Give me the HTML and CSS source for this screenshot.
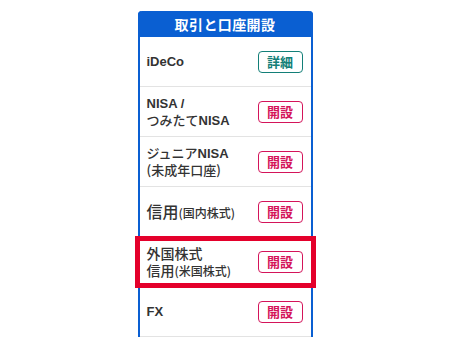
FILE: index.html
```html
<!DOCTYPE html>
<html lang="ja">
<head>
<meta charset="utf-8">
<link rel="stylesheet" href="styles.css">
</head>
<body>
<div class="card">
  <div class="card-head">取引と口座開設</div>
  <div class="row">
    <div class="label latin">iDeCo</div>
    <span class="btn btn-detail">詳細</span>
  </div>
  <div class="row">
    <div class="label"><span class="latin">NISA /</span><br>つみたて<span class="latin">NISA</span></div>
    <span class="btn">開設</span>
  </div>
  <div class="row">
    <div class="label">ジュニア<span class="latin">NISA</span><br><span class="sub">(未成年口座)</span></div>
    <span class="btn">開設</span>
  </div>
  <div class="row">
    <div class="label"><span class="big">信用</span><span class="small">(国内株式)</span></div>
    <span class="btn">開設</span>
  </div>
  <div class="row row-hl">
    <div class="label label-lg">外国株式<br>信用<span class="small">(米国株式)</span></div>
    <span class="btn">開設</span>
  </div>
  <div class="row">
    <div class="label latin">FX</div>
    <span class="btn">開設</span>
  </div>
</div>
</body>
</html>
```
FILE: styles.css
```css
html, body {
  margin: 0;
  padding: 0;
  background: #fff;
}
body {
  font-family: "Noto Sans CJK JP", "Noto Sans", sans-serif;
  color: #333;
}
.card {
  width: 171px;
  margin: 11px auto 0;
  border: 2px solid #0a5fd2;
  border-top: 0;
  border-bottom: 0;
  border-radius: 4px 4px 0 0;
}
.card-head {
  height: 26px;
  margin: 0 -2px;
  background: #0a5fd2;
  border-radius: 4px 4px 0 0;
  color: #fff;
  font-size: 14px;
  font-weight: 700;
  line-height: 26px;
  text-align: center;
  letter-spacing: 0.4px;
}
.row {
  height: 49px;
  border-bottom: 1px solid #e3e3e3;
  display: flex;
  align-items: center;
  justify-content: space-between;
  padding: 0 8px 0 7px;
  position: relative;
}
.label {
  font-size: 13px;
  line-height: 16px;
  font-weight: 500;
  color: #333;
}
.label-lg {
  font-size: 14px;
  line-height: 17px;
}
.latin {
  font-family: "Liberation Sans", "Noto Sans", sans-serif;
  font-weight: 700;
  font-size: 13px;
}
.sub {
  font-size: 13px;
}
.big {
  font-size: 16px;
}
.small {
  font-size: 12px;
}
.btn {
  width: 43px;
  height: 20px;
  border: 1px solid #d4145a;
  border-radius: 4px;
  color: #d4145a;
  font-size: 13px;
  font-weight: 700;
  line-height: 20px;
  text-align: center;
  background: #fff;
  flex: none;
}
.btn-detail {
  border-color: #137f78;
  color: #137f78;
}
.row-hl::after {
  content: "";
  position: absolute;
  left: -5px;
  right: -5px;
  top: -1px;
  bottom: -2px;
  border: 5px solid #e4002b;
  pointer-events: none;
}
```
